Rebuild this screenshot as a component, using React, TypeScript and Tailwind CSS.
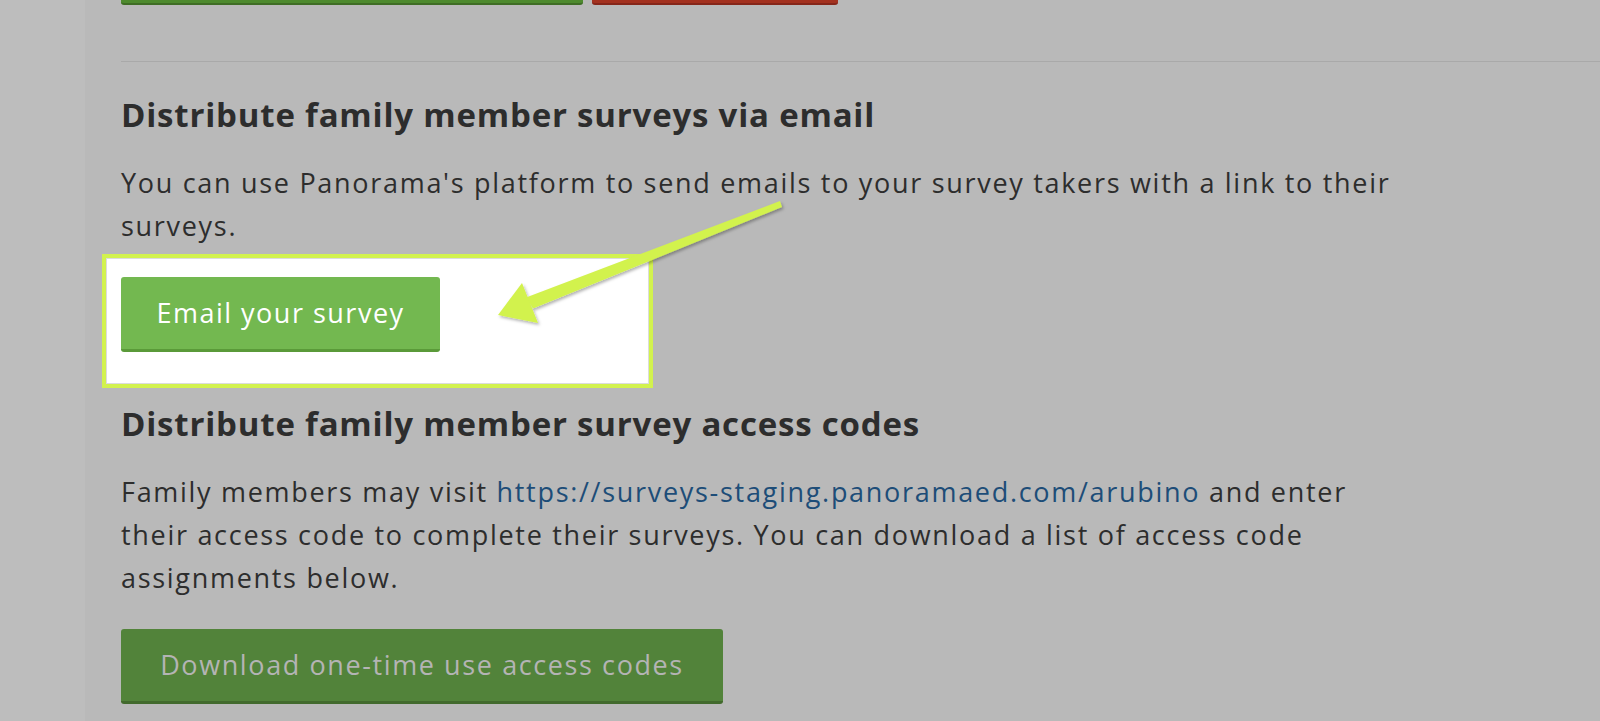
import React from "react";

const font = { fontFamily: '"Open Sans", "Liberation Sans", sans-serif' };

export default function App() {
  return (
    <div className="relative flex h-[721px] w-[1600px] overflow-hidden bg-[#b9b9b9]" style={font}>
      {/* SIDEBAR STRIP */}
      <div className="h-full w-[85px] shrink-0 bg-[#bdbdbd]" />

      {/* MAIN */}
      <div className="flex min-w-0 flex-1 flex-col pl-[36px]">
        {/* cut-off buttons from the section above */}
        <div className="flex gap-[9px]">
          <div className="h-[5px] w-[462px] rounded-b-[3px] border-b-[2px] border-[#3f6d25] bg-[#4e8a2e]" />
          <div className="h-[5px] w-[246px] rounded-b-[3px] border-b-[2px] border-[#86261a] bg-[#a3311f]" />
        </div>

        <div className="mt-[56px] h-px w-full bg-[#a9a9a9]" />

        <h2 className="mt-[33px] text-[33px] font-bold leading-[40px] tracking-[0.8px] text-[#2d2d2d]">
          Distribute family member surveys via email
        </h2>

        <p className="mt-[26px] max-w-[1280px] text-[27px] leading-[43px] tracking-[1.7px] text-[#2d2d2d]">
          You can use Panorama&apos;s platform to send emails to your survey takers with a link to their surveys.
        </p>

        {/* HIGHLIGHTED BOX */}
        <div className="-ml-[19px] mt-[7px] w-[551px] border-[4px] border-[#d2f24e] bg-white px-[15px] pb-[32px] pt-[19px] shadow-[inset_0_0_0_1px_#dcdcdc]">
          <button className="flex h-[75px] w-[319px] items-center justify-center rounded-[3px] border-b-[3px] border-[#5a9a39] bg-[#73b850] text-[27px] font-medium tracking-[1.5px] text-white">
            Email your survey
          </button>
        </div>

        <h2 className="mt-[16px] text-[33px] font-bold leading-[40px] tracking-[0.8px] text-[#2d2d2d]">
          Distribute family member survey access codes
        </h2>

        <p className="mt-[26px] max-w-[1280px] text-[27px] leading-[43px] tracking-[1.7px] text-[#2d2d2d]">
          Family members may visit{" "}
          <a className="text-[#1d4d78]">https://surveys-staging.panoramaed.com/arubino</a> and enter their access code to
          complete their surveys. You can download a list of access code assignments below.
        </p>

        <button className="mt-[30px] flex h-[75px] w-[602px] items-center justify-center rounded-[3px] border-b-[3px] border-[#426a2d] bg-[#52833a] text-[27px] font-medium tracking-[1.6px] text-[#b4b4b4]">
          Download one-time use access codes
        </button>
      </div>

      {/* ARROW ANNOTATION */}
      <svg
        className="pointer-events-none absolute left-0 top-0"
        width="1600"
        height="721"
        viewBox="0 0 1600 721"
      >
        <defs>
          <filter id="arrowShadow" x="-10%" y="-10%" width="130%" height="130%">
            <feDropShadow dx="1.5" dy="2" stdDeviation="1.5" floodColor="#000" floodOpacity="0.3" />
          </filter>
        </defs>
        <g filter="url(#arrowShadow)" fill="#d2f24e">
          <polygon points="533,308.5 526,297.5 780,201 782,207" />
          <polygon points="498,315 522,283 538,323" />
        </g>
      </svg>
    </div>
  );
}
